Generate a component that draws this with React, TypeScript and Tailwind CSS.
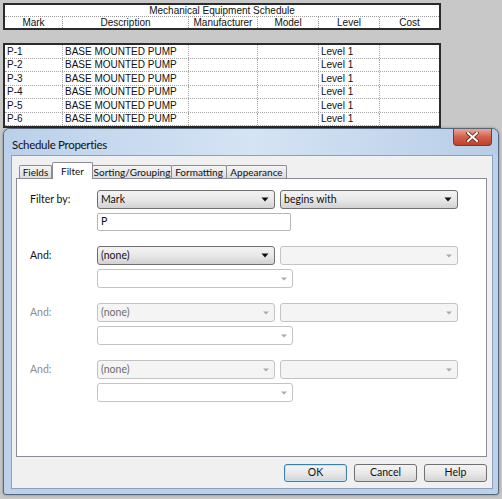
import React from 'react';

const cols = [
  { name: 'Mark', w: 58 },
  { name: 'Description', w: 126 },
  { name: 'Manufacturer', w: 69 },
  { name: 'Model', w: 61 },
  { name: 'Level', w: 61 },
  { name: 'Cost', w: 59 },
];

const rows = ['P-1', 'P-2', 'P-3', 'P-4', 'P-5', 'P-6'];

type ComboKind = 'active' | 'disabled' | 'empty';

const Arrow = ({ on }: { on: boolean }) =>
  on ? (
    <svg width="8" height="5" viewBox="0 0 8 5" className="shrink-0">
      <path d="M0.5 0.5 L7.5 0.5 L4 4.5 Z" fill="#111" />
    </svg>
  ) : (
    <svg width="6" height="4" viewBox="0 0 6 4" className="shrink-0">
      <path d="M0 0.5 L6 0.5 L3 3.5 Z" fill="#a9a9a9" />
    </svg>
  );

const Combo = ({ kind, value, w }: { kind: ComboKind; value?: string; w: string }) => {
  const skin =
    kind === 'active'
      ? 'border-[#707070] bg-linear-to-b from-[#f3f3f3] via-[#e8e8e8] to-[#d2d2d2] text-[#111]'
      : kind === 'disabled'
        ? 'border-[#c3c3c3] bg-[#f4f4f4] text-[#6d6d6d]'
        : 'border-[#c3c3c3] bg-white text-[#6d6d6d]';
  return (
    <div className={`${w} h-[19px] border rounded-[3px] flex items-center justify-between pl-[3px] pr-[5px] ${skin}`}>
      <span className="truncate">{value}</span>
      <Arrow on={kind === 'active'} />
    </div>
  );
};

const FilterGroup = ({
  label,
  on,
  first,
  second,
  third,
}: {
  label: string;
  on: boolean;
  first: React.ReactNode;
  second: React.ReactNode;
  third: React.ReactNode;
}) => (
  <div>
    <div className="flex items-center h-[19px]">
      <div className={`w-[67px] ${on ? 'text-[#111]' : 'text-[#8d8d8d]'}`}>{label}</div>
      {first}
      <div className="ml-[5px]">{second}</div>
    </div>
    <div className="mt-[4px] ml-[67px]">{third}</div>
  </div>
);

const Tab = ({ label, w, selected }: { label: string; w: string; selected?: boolean }) =>
  selected ? (
    <div
      className={`${w} h-[17px] -mb-px relative z-10 bg-white border border-b-0 border-[#898c95] rounded-t-[2px] flex justify-center pt-[1px] text-[10px]`}
    >
      {label}
    </div>
  ) : (
    <div
      className={`${w} h-[13px] -ml-px first:ml-0 bg-linear-to-b from-[#f5f5f5] to-[#dcdcdc] border border-b-0 border-[#898c95] rounded-t-[2px] flex justify-center leading-[13px] whitespace-nowrap text-[10px]`}
    >
      {label}
    </div>
  );

const Button = ({ label, def }: { label: string; def?: boolean }) => (
  <div
    className={`w-[63px] h-[18px] rounded-[3px] border flex items-center justify-center bg-linear-to-b from-[#f4f4f4] via-[#e9e9e9] to-[#d4d4d4] ${
      def ? 'border-[#3c7fb1] shadow-[inset_0_0_0_1px_#c5e4f7]' : 'border-[#707070]'
    }`}
  >
    {label}
  </div>
);

export default function App() {
  return (
    <div className="w-[502px] h-[499px] bg-[#c8c8c8] overflow-hidden pt-[3px] pl-[3px]">
      {/* schedule behind the dialog */}
      <div className="w-[438px] font-['Liberation_Sans',Arial,sans-serif] text-[10px] text-[#111]">
        <div className="h-[27px] border-2 border-[#2b2b2b] bg-white flex flex-col">
          <div className="h-[12px] border-b border-dotted border-[#9a9a9a] flex items-center justify-center leading-none">
            Mechanical Equipment Schedule
          </div>
          <div className="flex-1 flex">
            {cols.map((c, i) => (
              <div
                key={c.name}
                style={{ width: c.w }}
                className={`flex items-center justify-center leading-none ${
                  i < cols.length - 1 ? 'border-r border-dotted border-[#9a9a9a]' : ''
                }`}
              >
                {c.name}
              </div>
            ))}
          </div>
        </div>
        <div className="h-[13px]" />
        <div className="h-[85px] border-2 border-[#2b2b2b] bg-white overflow-hidden">
          {rows.map((r) => (
            <div key={r} className="h-[13.5px] flex border-b border-dotted border-[#a5a5a5]">
              {cols.map((c, i) => (
                <div
                  key={c.name}
                  style={{ width: c.w }}
                  className={`flex items-center pl-[2px] pt-[1px] leading-none ${
                    i < cols.length - 1 ? 'border-r border-dotted border-[#a5a5a5]' : ''
                  }`}
                >
                  {i === 0 ? r : i === 1 ? 'BASE MOUNTED PUMP' : i === 4 ? 'Level 1' : ''}
                </div>
              ))}
            </div>
          ))}
        </div>
      </div>

      {/* dialog */}
      <div className="w-[496px] h-[367px] border border-[#56667a] rounded-t-[7px] rounded-b-[3px] bg-[#bdd2ea] flex flex-col font-['Lato','Liberation_Sans',sans-serif] text-[10.5px] text-[#111] shadow-[0_0_3px_rgba(0,0,0,0.35)]">
        <div className="h-[26px] rounded-t-[6px] bg-linear-to-r from-[#bad0ea] via-[#d5e4f4] to-[#b7cde7] flex items-start justify-between pl-[8px] pr-[6px]">
          <span className="mt-[7px] text-[11.5px] tracking-[-0.3px]">Schedule Properties</span>
          <div className="w-[39px] h-[17px] rounded-b-[4px] border border-t-0 border-[#7a3a2e] bg-linear-to-b from-[#e9a797] via-[#d1604b] to-[#c0402b] flex items-center justify-center">
            <svg width="13" height="10" viewBox="0 0 13 10">
              <path d="M2 1 L11 9 M11 1 L2 9" stroke="#5a2a22" strokeWidth="3.6" strokeLinecap="square" />
              <path d="M2 1 L11 9 M11 1 L2 9" stroke="#ffffff" strokeWidth="2" strokeLinecap="square" />
            </svg>
          </div>
        </div>

        <div className="ml-[7px] mr-[5px] mb-[5px] flex-1 border border-[#8aa0bc] bg-[#f0f0f0] flex flex-col pt-[6px] pl-[4px] pr-[5px]">
          <div className="h-[16px] flex items-end pl-[3px]">
            <Tab label="Fields" w="w-[33px]" />
            <Tab label="Filter" w="w-[41px]" selected />
            <Tab label="Sorting/Grouping" w="w-[80px]" />
            <Tab label="Formatting" w="w-[56px]" />
            <Tab label="Appearance" w="w-[61px]" />
          </div>

          <div className="w-[471px] h-[279px] border border-[#898c95] bg-white pt-[11px] pl-[13px] flex flex-col gap-[15px]">
            <FilterGroup
              label="Filter by:"
              on
              first={<Combo kind="active" value="Mark" w="w-[178px]" />}
              second={<Combo kind="active" value="begins with" w="w-[178px]" />}
              third={
                <div className="w-[194px] h-[18px] border border-[#b3b6bb] rounded-[2px] bg-white flex items-center pl-[3px]">
                  P
                </div>
              }
            />
            <FilterGroup
              label="And:"
              on
              first={<Combo kind="active" value="(none)" w="w-[178px]" />}
              second={<Combo kind="disabled" w="w-[178px]" />}
              third={<Combo kind="empty" w="w-[196px]" />}
            />
            <FilterGroup
              label="And:"
              on={false}
              first={<Combo kind="disabled" value="(none)" w="w-[178px]" />}
              second={<Combo kind="disabled" w="w-[178px]" />}
              third={<Combo kind="empty" w="w-[196px]" />}
            />
            <FilterGroup
              label="And:"
              on={false}
              first={<Combo kind="disabled" value="(none)" w="w-[178px]" />}
              second={<Combo kind="disabled" w="w-[178px]" />}
              third={<Combo kind="empty" w="w-[196px]" />}
            />
          </div>

          <div className="mt-[7px] flex justify-end gap-[7px]">
            <Button label="OK" def />
            <Button label="Cancel" />
            <Button label="Help" />
          </div>
        </div>
      </div>
    </div>
  );
}
